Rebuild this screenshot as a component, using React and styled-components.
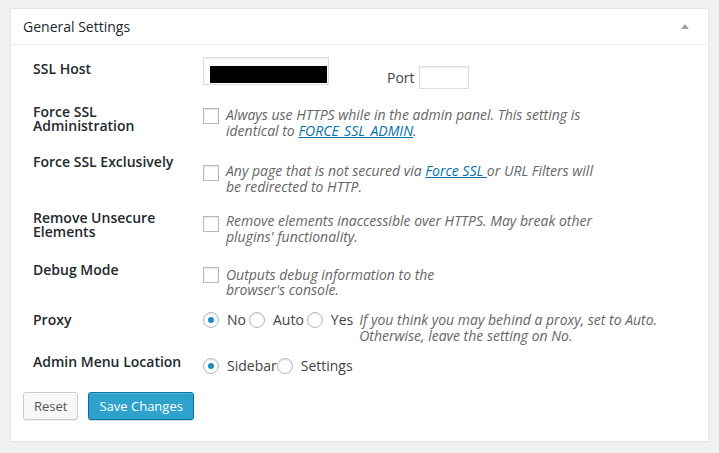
import React from "react";
import styled, { createGlobalStyle } from "styled-components";

const Global = createGlobalStyle`
  html, body { margin: 0; padding: 0; background: #f1f1f1; }
  body { font-family: "Open Sans", "Noto Sans", sans-serif; color: #444; font-size: 14px; }
  * { box-sizing: border-box; }
`;

const Panel = styled.div`
  margin: 8px 10px 0 10px;
  background: #fff;
  border: 1px solid #e5e5e5;
  box-shadow: 0 1px 1px rgba(0, 0, 0, 0.04);
`;

const Header = styled.div`
  display: flex;
  align-items: center;
  justify-content: space-between;
  height: 36px;
  padding: 8px 12px;
  border-bottom: 1px solid #eee;
`;

const Title = styled.h2`
  margin: 0;
  font-size: 14px;
  font-weight: 400;
  line-height: 19px;
  color: #23282d;
`;

const Toggle = styled.span`
  width: 0;
  height: 0;
  margin-right: 7px;
  border-left: 4px solid transparent;
  border-right: 4px solid transparent;
  border-bottom: 5px solid #a0a5aa;
`;

const Body = styled.div`
  padding: 17px 12px 21px 12px;
`;

const Row = styled.div`
  display: grid;
  grid-template-columns: 170px 1fr;
  height: ${(p) => p.$h}px;
  padding-left: 10px;
`;

const Label = styled.div`
  font-size: 14px;
  font-weight: 600;
  line-height: 14px;
  color: #23282d;
`;

const Field = styled.div`
  display: flex;
  align-items: flex-start;
  margin-top: ${(p) => p.$off}px;
`;

const HostInput = styled.div`
  width: 126px;
  height: 28px;
  border: 1px solid #ddd;
  box-shadow: inset 0 1px 2px rgba(0, 0, 0, 0.07);
  background: #fff;
  padding: 8px 0 0 6px;
`;

const Redact = styled.div`
  width: 117px;
  height: 17px;
  background: #000;
`;

const PortLabel = styled.span`
  margin: 13px 4px 0 58px;
  line-height: 16px;
  color: #444;
`;

const PortInput = styled.div`
  margin-top: 9px;
  width: 50px;
  height: 23px;
  border: 1px solid #ddd;
  box-shadow: inset 0 1px 2px rgba(0, 0, 0, 0.07);
  background: #fff;
`;

const Checkbox = styled.span`
  flex: none;
  width: 16px;
  height: 16px;
  margin-top: ${(p) => p.$off ?? 1}px;
  margin-right: 7px;
  border: 1px solid #b4b9be;
  background: #fff;
  box-shadow: inset 0 1px 2px rgba(0, 0, 0, 0.1);
`;

const Desc = styled.div`
  font-style: italic;
  font-size: 14px;
  line-height: ${(p) => p.$lh ?? 16}px;
  color: #666;
  white-space: nowrap;
`;

const Link = styled.a`
  color: #0073aa;
  text-decoration: underline;
`;

const RadioGroup = styled.div`
  display: flex;
  align-items: center;
  height: 16px;
  line-height: 16px;
  color: #444;
  white-space: pre;
`;

const Radio = styled.span`
  flex: none;
  width: 16px;
  height: 16px;
  border-radius: 50%;
  border: 1px solid #b4b9be;
  background: #fff;
  box-shadow: inset 0 1px 2px rgba(0, 0, 0, 0.1);
  margin-right: 8px;
  display: flex;
  align-items: center;
  justify-content: center;
  &::before {
    content: "";
    width: 6px;
    height: 6px;
    border-radius: 50%;
    background: ${(p) => (p.$checked ? "#1e8cbe" : "transparent")};
  }
`;

const RadioText = styled.span`
  margin-right: ${(p) => p.$mr ?? 3}px;
`;

const ProxyDesc = styled(Desc)`
  margin-left: 2px;
`;

const Buttons = styled.div`
  display: flex;
  gap: 10px;
`;

const Button = styled.button`
  height: 28px;
  padding: 0 10px 1px;
  font-family: "Open Sans", "Noto Sans", sans-serif;
  font-size: 13px;
  line-height: 26px;
  border-radius: 3px;
  border: 1px solid ${(p) => (p.$primary ? "#0074a2" : "#ccc")};
  background: ${(p) => (p.$primary ? "#2ea2cc" : "#f7f7f7")};
  color: ${(p) => (p.$primary ? "#fff" : "#555")};
  box-shadow: ${(p) =>
    p.$primary
      ? "inset 0 1px 0 rgba(120,200,230,.5), 0 1px 0 rgba(0,0,0,.15)"
      : "inset 0 1px 0 #fff, 0 1px 0 rgba(0,0,0,.08)"};
  cursor: pointer;
`;

export default function App() {
  return (
    <>
      <Global />
      <Panel>
        <Header>
          <Title>General Settings</Title>
          <Toggle />
        </Header>
        <Body>
          <Row $h={43}>
            <Label>SSL Host</Label>
            <Field $off={-5}>
              <HostInput>
                <Redact />
              </HostInput>
              <PortLabel>Port</PortLabel>
              <PortInput />
            </Field>
          </Row>
          <Row $h={50}>
            <Label>
              Force SSL
              <br />
              Administration
            </Label>
            <Field $off={2}>
              <Checkbox $off={1} />
              <Desc>
                Always use HTTPS while in the admin panel. This setting is
                <br />
                identical to <Link href="#">FORCE_SSL_ADMIN</Link>.
              </Desc>
            </Field>
          </Row>
          <Row $h={56}>
            <Label>Force SSL Exclusively</Label>
            <Field $off={8}>
              <Checkbox $off={2} />
              <Desc>
                Any page that is not secured via <Link href="#">Force SSL </Link>or URL Filters will
                <br />
                be redirected to HTTP.
              </Desc>
            </Field>
          </Row>
          <Row $h={52}>
            <Label>
              Remove Unsecure
              <br />
              Elements
            </Label>
            <Field $off={2}>
              <Checkbox $off={3} />
              <Desc>
                Remove elements inaccessible over HTTPS. May break other
                <br />
                plugins' functionality.
              </Desc>
            </Field>
          </Row>
          <Row $h={50}>
            <Label>Debug Mode</Label>
            <Field $off={4}>
              <Checkbox $off={0} />
              <Desc $lh={15}>
                Outputs debug information to the
                <br />
                browser's console.
              </Desc>
            </Field>
          </Row>
          <Row $h={42}>
            <Label>Proxy</Label>
            <Field $off={-1}>
              <RadioGroup>
                <Radio $checked />
                <RadioText>No</RadioText>
                <Radio />
                <RadioText>Auto</RadioText>
                <Radio />
                <RadioText $mr={4}>Yes</RadioText>
              </RadioGroup>
              <ProxyDesc>
                If you think you may behind a proxy, set to Auto.
                <br />
                Otherwise, leave the setting on No.
              </ProxyDesc>
            </Field>
          </Row>
          <Row $h={37}>
            <Label>Admin Menu Location</Label>
            <Field $off={3}>
              <RadioGroup>
                <Radio $checked />
                <RadioText $mr={0}>Sidebar</RadioText>
                <Radio />
                <RadioText>Settings</RadioText>
              </RadioGroup>
            </Field>
          </Row>
          <Buttons>
            <Button>Reset</Button>
            <Button $primary>Save Changes</Button>
          </Buttons>
        </Body>
      </Panel>
    </>
  );
}
